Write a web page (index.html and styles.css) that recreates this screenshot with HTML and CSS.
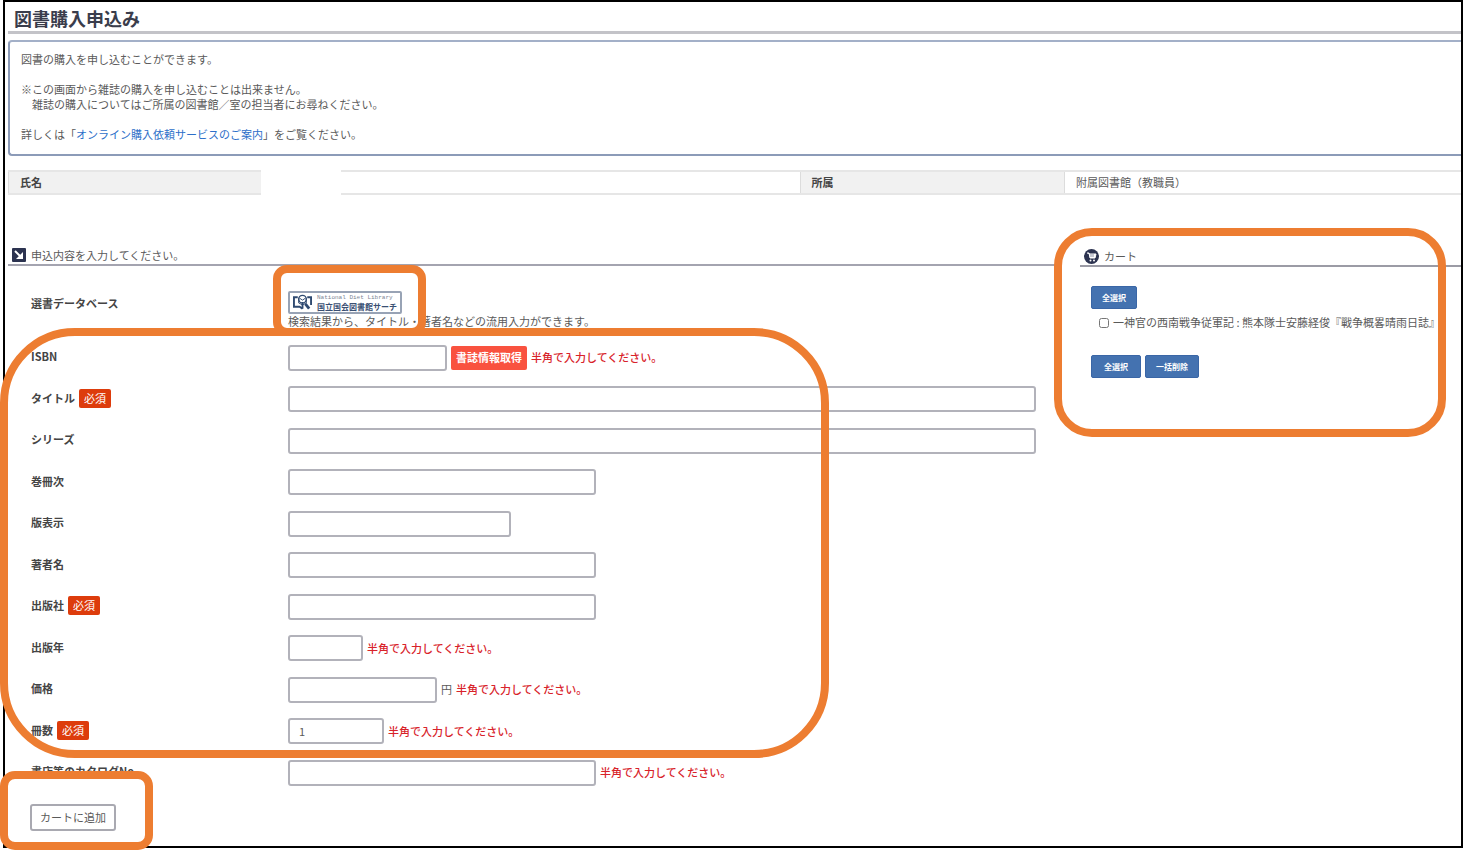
FILE: index.html
```html
<!DOCTYPE html>
<html lang="ja">
<head>
<meta charset="utf-8">
<title>図書購入申込み</title>
<link rel="stylesheet" href="styles.css">
</head>
<body>
<div class="page">
  <main class="frame">
    <h1 class="title">図書購入申込み</h1>
    <div class="info">
      <p>図書の購入を申し込むことができます。</p>
      <p>※この画面から雑誌の購入を申し込むことは出来ません。<br>　雑誌の購入についてはご所属の図書館／室の担当者にお尋ねください。</p>
      <p>詳しくは「<a href="#guide">オンライン購入依頼サービスのご案内</a>」をご覧ください。</p>
    </div>
    <table class="user">
      <tr>
        <th class="user-name" scope="row">氏名</th>
        <td class="user-name-value"><span class="mask"></span></td>
        <th class="user-dept" scope="row">所属</th>
        <td>附属図書館（教職員）</td>
      </tr>
    </table>
    <div class="columns">
      <form class="order">
        <h2 class="heading">
          <svg class="heading-icon" viewBox="0 0 14 14" aria-hidden="true"><rect width="14" height="14" rx="1" fill="#2c3350"/><path d="M3 3l6 6" stroke="#fff" stroke-width="2"/><path d="M11 4v7H4z" fill="#fff"/></svg>
          申込内容を入力してください。
        </h2>
        <div class="database">
          <span class="label">選書データベース</span>
          <div>
            <button type="button" class="ndl">
              <svg class="ndl-icon" viewBox="0 0 20 17" aria-hidden="true" fill="none" stroke="#2f4a70"><path d="M5 3H1v10h6l3 2M15 3h4v8" stroke-width="2"/><path d="M10 8v7" stroke-width="2"/><circle cx="10" cy="5" r="4" stroke-width="1.5"/><path d="M6 4v5l4 2 4-2V4M7 4l3 2 3-2" stroke-width="1"/><path d="M13 10l4 5" stroke-width="3"/></svg>
              <span class="ndl-text"><span class="ndl-en">National Diet Library</span><span class="ndl-ja">国立国会図書館サーチ</span></span>
            </button>
            <p class="hint">検索結果から、タイトル・著者名などの流用入力ができます。</p>
          </div>
        </div>
        <div class="fields">
          <div class="row"><label class="label" for="isbn">ISBN</label><div class="control"><input class="box w-isbn" id="isbn" type="text"><button type="button" class="fetch">書誌情報取得</button><span class="note">半角で入力してください。</span></div></div>
          <div class="row"><label class="label" for="name">タイトル<span class="badge">必須</span></label><div class="control"><input class="box w-full" id="name" type="text"></div></div>
          <div class="row"><label class="label" for="series">シリーズ</label><div class="control"><input class="box w-full" id="series" type="text"></div></div>
          <div class="row"><label class="label" for="volume">巻冊次</label><div class="control"><input class="box w-long" id="volume" type="text"></div></div>
          <div class="row"><label class="label" for="edition">版表示</label><div class="control"><input class="box w-edition" id="edition" type="text"></div></div>
          <div class="row"><label class="label" for="author">著者名</label><div class="control"><input class="box w-long" id="author" type="text"></div></div>
          <div class="row"><label class="label" for="publisher">出版社<span class="badge">必須</span></label><div class="control"><input class="box w-long" id="publisher" type="text"></div></div>
          <div class="row"><label class="label" for="year">出版年</label><div class="control"><input class="box w-year" id="year" type="text"><span class="note">半角で入力してください。</span></div></div>
          <div class="row"><label class="label" for="price">価格</label><div class="control"><input class="box w-price" id="price" type="text"><span>円</span><span class="note">半角で入力してください。</span></div></div>
          <div class="row"><label class="label" for="count">冊数<span class="badge">必須</span></label><div class="control"><input class="box w-count" id="count" type="text" value="1"><span class="note">半角で入力してください。</span></div></div>
          <div class="row"><label class="label" for="catalog">書店等のカタログNo.</label><div class="control"><input class="box w-long" id="catalog" type="text"><span class="note">半角で入力してください。</span></div></div>
        </div>
        <button type="submit" class="add">カートに追加</button>
      </form>
      <aside class="cart">
        <h2 class="heading cart-heading">
          <svg class="cart-icon" viewBox="0 0 15 15" aria-hidden="true"><circle cx="7.5" cy="7.5" r="7.5" fill="#2c3350"/><path d="M3 4h2l1 5h5l1-4H5" fill="#fff" stroke="#fff"/><path d="M7 5v3M9 5v3" stroke="#8d92a6"/><circle cx="6.5" cy="11.5" r="1" fill="#fff"/><circle cx="10" cy="11.5" r="1" fill="#fff"/></svg>
          カート
        </h2>
        <div class="cart-body">
          <button type="button" class="blue">全選択</button>
          <label class="item"><input type="checkbox" class="check">一神官の西南戦争従軍記 : 熊本隊士安藤経俊『戰争概畧晴雨日誌』</label>
          <div class="actions"><button type="button" class="blue blue-wide">全選択</button><button type="button" class="blue">一括削除</button></div>
        </div>
      </aside>
    </div>
  </main>
  <div class="ring ring-database"></div>
  <div class="ring ring-fields"></div>
  <div class="ring ring-cart"></div>
  <div class="ring ring-add"></div>
</div>
</body>
</html>
```
FILE: styles.css
```css
* { box-sizing: border-box; }
body {
  margin: 0;
  background: #fff;
  color: #5a5a5a;
  font: 11px/15px "Noto Sans CJK JP", sans-serif;
}
p, h1, h2 { margin: 0; }
button, input { font: inherit; color: inherit; margin: 0; }
.page { position: relative; padding: 0 0 2px 3px; }
.frame { border: 2px solid #000; padding: 0 0 15px 3px; }

.title {
  padding: 5px 0 2px 6px;
  border-bottom: 3px solid #c3c3c8;
  color: #3a3d4c;
  font-size: 18px;
  line-height: 22px;
}
.info {
  display: grid;
  gap: 15px;
  margin-top: 6px;
  padding: 10px 11px 12px;
  border: 2px solid #8c9bb8;
  border-top-color: #a3b0c8;
  border-right: 0;
  border-radius: 4px 0 0 4px;
}
.info a { color: #2d6fc9; text-decoration: none; }

.user { width: 100%; margin-top: 14px; border-collapse: collapse; table-layout: fixed; }
.user th, .user td {
  position: relative;
  height: 23px;
  padding: 0 11px;
  border: 1px solid #dcdcdc;
  border-width: 2px 1px;
  border-color: #e6e6e6 #dcdcdc;
  text-align: left;
}
.user td:last-child { border-right: 0; }
.user th { background: #f1f1f1; color: #444; }
.user-name { width: 17.4%; }
.user-name-value { width: 37.1%; }
.user-dept { width: 18.2%; }
.mask { position: absolute; left: -1px; top: -3px; width: 80px; height: 28px; background: #fff; }

.columns { display: grid; grid-template-columns: minmax(0, 1fr) 381px; gap: 25px; margin-top: 51px; }
.heading {
  display: flex;
  align-items: center;
  gap: 5px;
  height: 20px;
  padding-left: 4px;
  border-bottom: 2px solid #a4a4b0;
  font-size: 11px;
  font-weight: 400;
}
.heading-icon { width: 14px; height: 14px; }
.cart-icon { width: 15px; height: 15px; }

.database { display: grid; grid-template-columns: 257px 1fr; padding: 25px 0 0 23px; }
.database .label { padding-top: 5px; }
.label { color: #444; font-weight: 700; }
.ndl {
  display: flex;
  align-items: center;
  gap: 5px;
  width: 114px;
  height: 23px;
  padding: 0 3px;
  border: 2px solid #98a3b5;
  border-radius: 2px;
  background: #fff;
}
.ndl-icon { width: 20px; height: 17px; }
.ndl-text { display: grid; text-align: left; white-space: nowrap; }
.ndl-en { color: #7c8594; font: 6px/8px "Liberation Mono", monospace; }
.ndl-ja { color: #3a4f73; font-size: 8px; line-height: 9px; font-weight: 700; }

.fields { padding: 8px 19px 0 23px; }
.row { display: grid; grid-template-columns: 257px 1fr; align-items: center; height: 41px; }
.row:nth-child(even) { height: 42px; }
.row .label { display: flex; align-items: center; gap: 4px; padding-bottom: 2px; }
.control { display: flex; align-items: center; gap: 4px; }
.box {
  height: 26px;
  padding: 0 9px;
  border: 2px solid #b2b2ba;
  border-radius: 3px;
  background: #fff;
}
.w-isbn { width: 159px; }
.w-full { width: 100%; }
.w-long { width: 308px; }
.w-edition { width: 223px; }
.w-year { width: 75px; }
.w-price { width: 149px; }
.w-count { width: 96px; }
.badge {
  padding: 2px 5px;
  border-radius: 2px;
  background: #dd3c0c;
  color: #fff;
  font-weight: 400;
}
.fetch {
  height: 24px;
  padding: 0 5px;
  border: 0;
  border-radius: 2px;
  background: #f9523f;
  color: #fff;
  font-weight: 700;
}
.note { color: #d8232a; font-weight: 500; }
.add {
  height: 27px;
  margin: 11px 0 0 22px;
  padding: 0 8px;
  border: 2px solid #a9a9b1;
  border-radius: 3px;
  background: #fff;
}

.cart-heading { height: 21px; padding-top: 1px; border-color: #9b9ba5; }
.cart-body { display: grid; justify-items: start; padding: 19px 0 0 11px; }
.blue {
  height: 23px;
  padding: 0 10px;
  border: 1px solid #3a66a6;
  border-radius: 2px;
  background: #4472b0;
  color: #fff;
  font-size: 8px;
  font-weight: 700;
}
.blue-wide { padding: 0 12px; }
.item { display: flex; align-items: center; gap: 4px; padding: 6px 0 0 8px; white-space: nowrap; }
.check { width: 10px; height: 10px; }
.actions { display: flex; gap: 4px; margin-top: 25px; }

.ring { position: absolute; border: 8px solid #ed7d31; pointer-events: none; }
.ring-database { left: 273px; top: 265px; width: 153px; height: 71px; border-radius: 14px; }
.ring-fields { left: 0; top: 328px; width: 829px; height: 430px; border-radius: 75px; }
.ring-cart { right: 17px; top: 228px; width: 392px; height: 209px; border-radius: 38px; }
.ring-add { left: 0; top: 771px; width: 153px; height: 79px; border-radius: 15px; }
```
